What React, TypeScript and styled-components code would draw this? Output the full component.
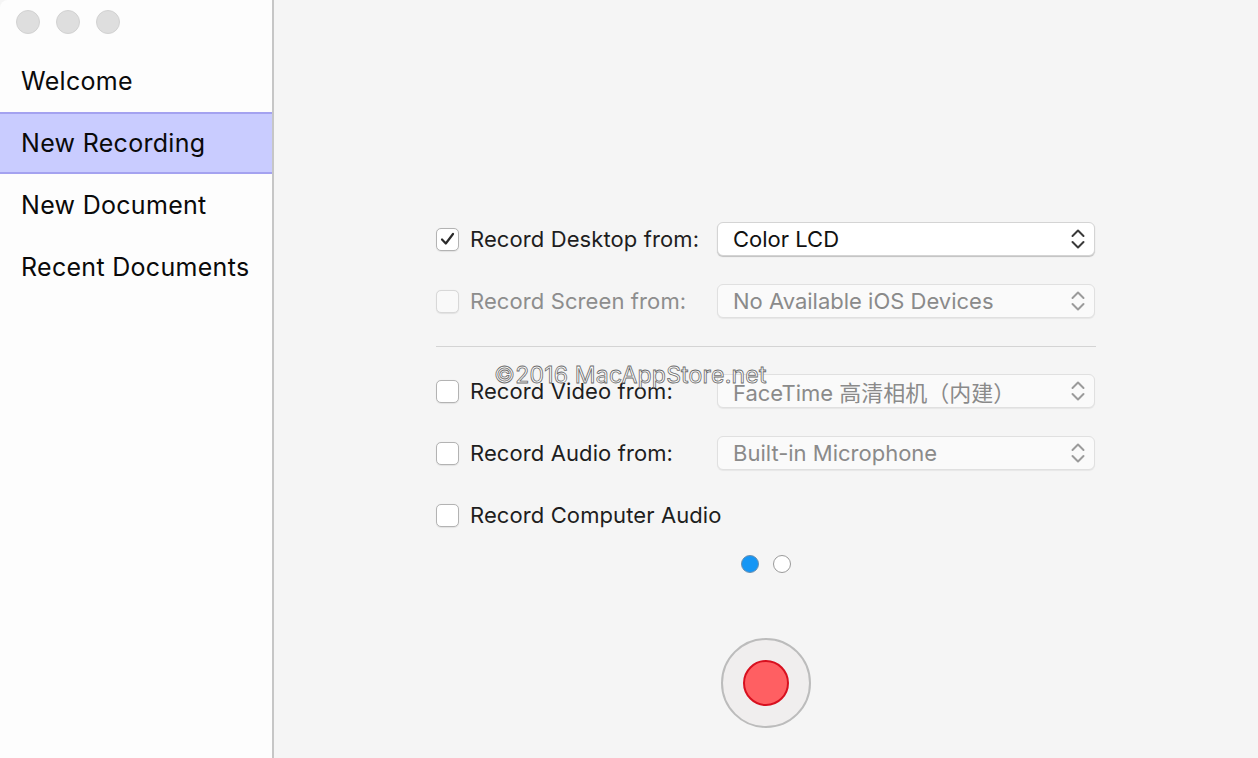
import styled, { createGlobalStyle } from 'styled-components'

const GlobalStyle = createGlobalStyle`
  html, body {
    margin: 0;
    padding: 0;
    background: #f5f5f5;
  }
  * {
    box-sizing: border-box;
  }
`

const Window = styled.div`
  display: flex;
  width: 1258px;
  height: 758px;
  overflow: hidden;
  font-family: Inter, "Liberation Sans", "Noto Sans CJK SC", sans-serif;
  background: #f5f5f5;
  border-radius: 8px 8px 0 0;
`

const Sidebar = styled.aside`
  width: 274px;
  flex-shrink: 0;
  background: #fdfdfd;
  border-right: 2px solid #c6c6c6;
  display: flex;
  flex-direction: column;
`

const TitleBar = styled.div`
  height: 50px;
  display: flex;
  align-items: flex-start;
  gap: 16px;
  padding: 10px 0 0 16px;
`

const Light = styled.span`
  width: 24px;
  height: 24px;
  border-radius: 50%;
  background: #dedede;
  border: 1px solid #d2d2d2;
`

const NavItem = styled.div<{ $active?: boolean }>`
  height: 62px;
  display: flex;
  align-items: center;
  padding-left: 21px;
  font-size: 25px;
  color: #0a0a0a;
  letter-spacing: 0.3px;
  background: ${p => (p.$active ? '#c9ccff' : 'transparent')};
  border-top: 2px solid ${p => (p.$active ? '#a4a2f0' : 'transparent')};
  border-bottom: 2px solid ${p => (p.$active ? '#a4a2f0' : 'transparent')};
`

const Main = styled.main`
  position: relative;
  flex: 1;
  display: flex;
  flex-direction: column;
  align-items: center;
  padding-top: 208px;
`

const Form = styled.div`
  width: 660px;
  display: flex;
  flex-direction: column;
`

const Row = styled.div`
  height: 62px;
  display: flex;
  align-items: center;
`

const Box = styled.span<{ $disabled?: boolean }>`
  width: 23px;
  height: 23px;
  border-radius: 5px;
  flex-shrink: 0;
  display: flex;
  align-items: center;
  justify-content: center;
  background: ${p => (p.$disabled ? '#f9f9f9' : '#ffffff')};
  border: 1px solid ${p => (p.$disabled ? '#d8d8d8' : '#b3b3b3')};
  box-shadow: 0 0.5px 1px rgba(0, 0, 0, 0.08);
`

const Label = styled.span<{ $disabled?: boolean }>`
  width: 247px;
  margin-left: 11px;
  font-size: 22px;
  letter-spacing: 0.1px;
  color: ${p => (p.$disabled ? '#8d8d8d' : '#1e1e1e')};
  white-space: nowrap;
`

const Select = styled.div<{ $disabled?: boolean }>`
  width: 378px;
  height: 34px;
  display: flex;
  align-items: center;
  justify-content: space-between;
  padding: 0 8px 0 15px;
  border-radius: 6px;
  font-size: 22px;
  color: ${p => (p.$disabled ? '#8a8a8a' : '#111111')};
  background: ${p => (p.$disabled ? '#fafafa' : '#ffffff')};
  border: 1px solid ${p => (p.$disabled ? '#e0e0e0' : '#d4d4d4')};
  box-shadow: 0 1px 1px ${p => (p.$disabled ? 'rgba(0,0,0,0.06)' : 'rgba(0,0,0,0.22)')};
  white-space: nowrap;
`

const Separator = styled.div`
  height: 28px;
  display: flex;
  align-items: center;

  &::after {
    content: '';
    flex: 1;
    height: 1px;
    background: #d4d4d4;
  }
`

const Pager = styled.div`
  display: flex;
  gap: 14px;
  margin-top: 9px;
`

const Dot = styled.span<{ $on?: boolean }>`
  width: 18px;
  height: 18px;
  border-radius: 50%;
  background: ${p => (p.$on ? '#1596f5' : '#ffffff')};
  border: 1px solid ${p => (p.$on ? '#6a8fb0' : '#9a9a9a')};
`

const RecordButton = styled.button`
  margin-top: 65px;
  width: 90px;
  height: 90px;
  border-radius: 50%;
  background: #f0eeee;
  border: 2px solid #bcbcbc;
  display: flex;
  align-items: center;
  justify-content: center;
  padding: 0;
  cursor: pointer;
`

const RecordDot = styled.span`
  width: 46px;
  height: 46px;
  border-radius: 50%;
  background: #ff5f62;
  border: 2px solid #d8101f;
`

const Watermark = styled.div`
  position: absolute;
  left: 220px;
  top: 361px;
  font-size: 23px;
  color: #ffffff;
  letter-spacing: 0.2px;
  -webkit-text-stroke: 0.8px #6c6c6c;
  pointer-events: none;
  white-space: nowrap;
`

function Check() {
  return (
    <svg width="15" height="14" viewBox="0 0 15 14">
      <path d="M2 7.5 L5.8 11.5 L13 2" fill="none" stroke="#2a2a2a" strokeWidth="2.2" strokeLinecap="round" strokeLinejoin="round" />
    </svg>
  )
}

function Chevrons({ color }: { color: string }) {
  return (
    <svg width="16" height="24" viewBox="0 0 16 24">
      <path d="M2.5 9 L8 3.5 L13.5 9" fill="none" stroke={color} strokeWidth="2" strokeLinecap="round" strokeLinejoin="round" />
      <path d="M2.5 15 L8 20.5 L13.5 15" fill="none" stroke={color} strokeWidth="2" strokeLinecap="round" strokeLinejoin="round" />
    </svg>
  )
}

interface OptionRowProps {
  label: string
  value?: string
  checked?: boolean
  disabled?: boolean
  dimValue?: boolean
}

function OptionRow({ label, value, checked, disabled, dimValue }: OptionRowProps) {
  return (
    <Row>
      <Box $disabled={disabled}>{checked && <Check />}</Box>
      <Label $disabled={disabled}>{label}</Label>
      {value !== undefined && (
        <Select $disabled={dimValue}>
          <span>{value}</span>
          <Chevrons color={dimValue ? '#9b9b9b' : '#3a3a3a'} />
        </Select>
      )}
    </Row>
  )
}

const navItems = ['Welcome', 'New Recording', 'New Document', 'Recent Documents']

export default function App() {
  return (
    <>
      <GlobalStyle />
      <Window>
        <Sidebar>
          <TitleBar>
            <Light />
            <Light />
            <Light />
          </TitleBar>
          {navItems.map(item => (
            <NavItem key={item} $active={item === 'New Recording'}>
              {item}
            </NavItem>
          ))}
        </Sidebar>
        <Main>
          <Form>
            <OptionRow label="Record Desktop from:" value="Color LCD" checked />
            <OptionRow label="Record Screen from:" value="No Available iOS Devices" disabled dimValue />
            <Separator />
            <OptionRow label="Record Video from:" value="FaceTime 高清相机（内建）" dimValue />
            <OptionRow label="Record Audio from:" value="Built-in Microphone" dimValue />
            <OptionRow label="Record Computer Audio" />
          </Form>
          <Pager>
            <Dot $on />
            <Dot />
          </Pager>
          <RecordButton aria-label="Record">
            <RecordDot />
          </RecordButton>
          <Watermark>©2016 MacAppStore.net</Watermark>
        </Main>
      </Window>
    </>
  )
}
